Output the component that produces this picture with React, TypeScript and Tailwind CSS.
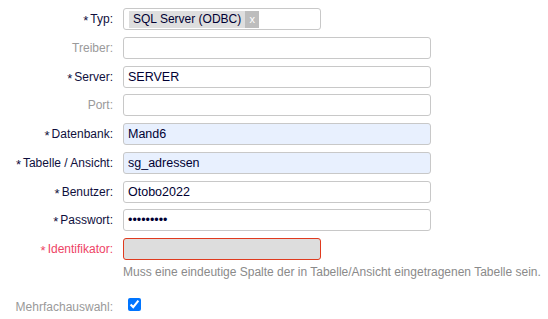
import React from 'react';

type Field = {
  label: string;
  required?: boolean;
  value?: string;
  kind?: 'text' | 'password' | 'autofill' | 'error';
};

const fields: Field[] = [
  { label: 'Treiber:' },
  { label: 'Server:', required: true, value: 'SERVER' },
  { label: 'Port:' },
  { label: 'Datenbank:', required: true, value: 'Mand6', kind: 'autofill' },
  { label: 'Tabelle / Ansicht:', required: true, value: 'sg_adressen', kind: 'autofill' },
  { label: 'Benutzer:', required: true, value: 'Otobo2022' },
  { label: 'Passwort:', required: true, value: 'geheim123', kind: 'password' },
];

function Star({ className = '' }: { className?: string }) {
  return <span className={`mr-[2px] inline-block translate-y-[2px] text-[13px] leading-none ${className}`}>*</span>;
}

function Label({ field }: { field: Field }) {
  return (
    <label
      className={`w-[115px] shrink-0 pr-[2px] text-right ${field.required ? 'text-[#0f0f3d]' : 'text-[#9a9a9a]'}`}
    >
      {field.required && <Star />}
      {field.label}
    </label>
  );
}

function Row({ field }: { field: Field }) {
  const bg = field.kind === 'autofill' ? 'bg-[#e8f0fe]' : 'bg-white';
  return (
    <div className="flex h-[22px] items-center gap-[8px]">
      <Label field={field} />
      <input
        type={field.kind === 'password' ? 'password' : 'text'}
        defaultValue={field.value ?? ''}
        readOnly
        className={`h-[22px] w-[308px] rounded-[3px] border border-[#c8c8c8] px-[4px] text-[12.5px] text-[#000033] outline-none ${bg}`}
      />
    </div>
  );
}

export default function App() {
  return (
    <div className="h-[319px] w-[548px] bg-white pt-[8px] text-[12px] leading-[14px] [font-family:'Liberation_Sans',Arial,sans-serif]">
      <div className="flex flex-col gap-[6.75px]">
        {/* Typ: token picker */}
        <div className="flex h-[22px] items-center gap-[8px]">
          <label className="w-[115px] shrink-0 pr-[2px] text-right text-[#0f0f3d]">
            <Star />
            Typ:
          </label>
          <div className="flex h-[22px] w-[198px] items-center rounded-[3px] border border-[#c8c8c8] bg-white pl-[5px]">
            <span className="flex h-[17px] items-center bg-[#dedede] text-[#000033]">
              <span className="px-[4px]">SQL Server (ODBC)</span>
              <span className="flex h-[17px] w-[14px] items-center justify-center bg-[#bdbdbd] text-[11px] text-white">x</span>
            </span>
          </div>
        </div>

        {fields.map((f) => (
          <Row key={f.label} field={f} />
        ))}

        {/* Identifikator with error state */}
        <div className="flex h-[22px] items-center gap-[8px]">
          <label className="w-[115px] shrink-0 pr-[2px] text-right text-[#ee4466]">
            <Star />
            Identifikator:
          </label>
          <input
            type="text"
            readOnly
            className="h-[22px] w-[198px] rounded-[3px] border border-[#e03a1e] bg-[#dddddd] px-[4px] outline-none"
          />
        </div>
      </div>

      <p className="mt-[5px] pl-[123px] text-[#8a8a8a]">
        Muss eine eindeutige Spalte der in Tabelle/Ansicht eingetragenen Tabelle sein.
      </p>

      <div className="mt-[17px] flex h-[16px] items-center gap-[8px]">
        <label className="w-[115px] shrink-0 pr-[2px] pt-[5px] text-right text-[#9a9a9a]">Mehrfachauswahl:</label>
        <input type="checkbox" defaultChecked className="ml-[5px] h-[13px] w-[13px] accent-[#0075ff]" />
      </div>
    </div>
  );
}
